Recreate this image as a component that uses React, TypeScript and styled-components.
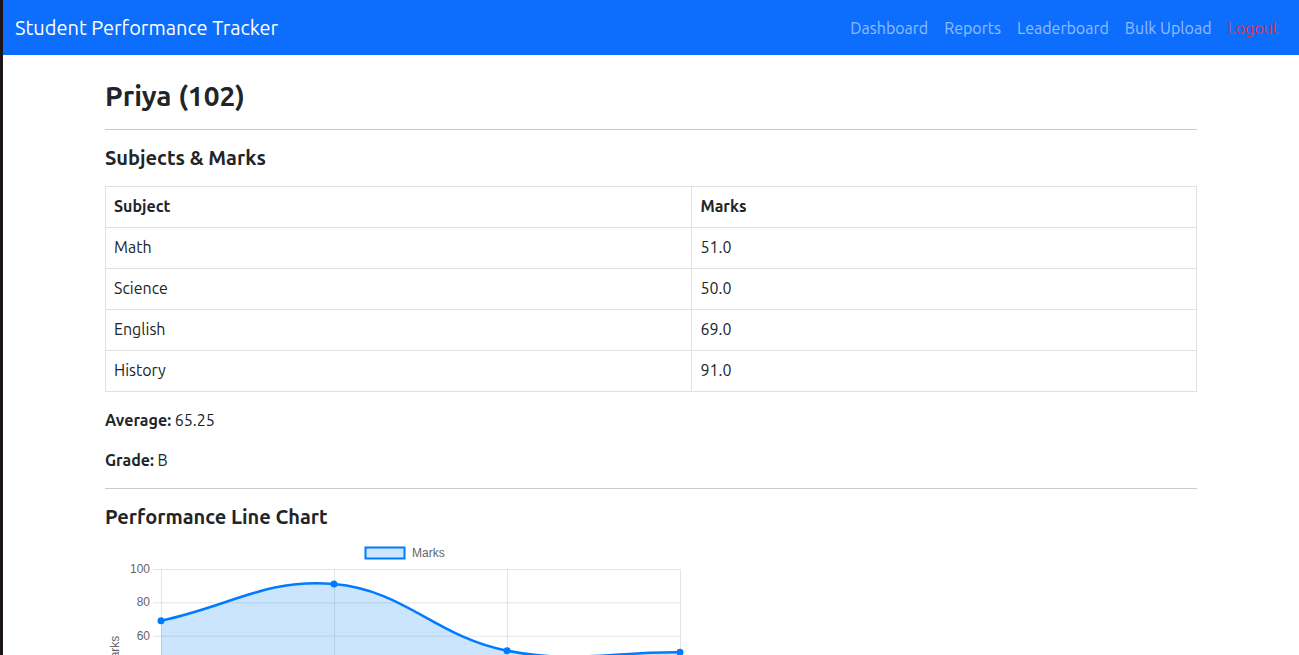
import React from "react";
import styled, { createGlobalStyle } from "styled-components";

const GlobalStyle = createGlobalStyle`
  html, body { margin: 0; padding: 0; background: #ffffff; }
  body {
    font-family: Ubuntu, "Noto Sans", "Open Sans", sans-serif;
    font-size: 16px;
    line-height: 1.5;
    color: #212529;
  }
  * { box-sizing: border-box; }
`;

const Shell = styled.div`
  display: flex;
  min-height: 655px;
`;

const EdgeStrip = styled.div`
  width: 3px;
  flex: 0 0 3px;
  background: #1c1519;
`;

const Page = styled.div`
  flex: 1;
  min-width: 0;
`;

const NavBar = styled.nav`
  height: 55px;
  background: #0d6efd;
  display: flex;
  align-items: center;
  justify-content: space-between;
  padding: 0 12px;
`;

const Brand = styled.a`
  color: #ffffff;
  font-size: 20px;
  line-height: 30px;
  text-decoration: none;
`;

const NavList = styled.div`
  display: flex;
  align-items: center;
`;

const NavLink = styled.a<{ $danger?: boolean }>`
  padding: 8px;
  font-size: 16px;
  line-height: 24px;
  text-decoration: none;
  color: ${(p) => (p.$danger ? "#dc3545" : "rgba(255,255,255,0.55)")};
`;

const Container = styled.main`
  max-width: 1116px;
  margin: 24px auto 0;
  padding: 0 12px;
`;

const Title = styled.h3`
  margin: 0 0 8px;
  font-size: 28px;
  font-weight: 600;
  line-height: 1.2;
`;

const Rule = styled.hr`
  margin: 16px 0;
  border: 0;
  border-top: 1px solid #c8c9ca;
`;

const SectionTitle = styled.h5<{ $gap?: number }>`
  margin: 0 0 ${(p) => p.$gap ?? 8}px;
  font-size: 20px;
  font-weight: 600;
  line-height: 1.2;
`;

const Table = styled.table`
  width: 100%;
  border-collapse: collapse;
  margin-bottom: 16px;
  border: 1px solid #dee2e6;
`;

const Th = styled.th<{ $w?: string }>`
  text-align: left;
  font-weight: 700;
  padding: 7px 8px 9px;
  border: 1px solid #dee2e6;
  width: ${(p) => p.$w ?? "auto"};
`;

const Td = styled.td`
  padding: 7px 8px 9px;
  border: 1px solid #dee2e6;
`;

const Para = styled.p`
  margin: 0 0 16px;
`;

const ChartBox = styled.div`
  width: 600px;
  height: 300px;
`;

const rows = [
  ["Math", "51.0"],
  ["Science", "50.0"],
  ["English", "69.0"],
  ["History", "91.0"],
];

const curve =
  "M161,619.67 C230.2,605 266.43,577.14 334,583 C404.83,589.14 435.41,635.53 507,649.67 C573.81,662.86 610.8,650.67 680,651.33";

const points: [number, number][] = [
  [161, 619.67],
  [334, 583],
  [507, 649.67],
  [680, 651.33],
];

const LineChart = () => {
  const grid = "rgba(0,0,0,0.1)";
  const yTicks = [
    { v: "100", y: 568 },
    { v: "80", y: 601.33 },
    { v: "60", y: 634.67 },
    { v: "40", y: 668 },
    { v: "20", y: 701.33 },
    { v: "0", y: 734.67 },
  ];
  return (
    <svg width="600" height="300" viewBox="105 536 600 300" style={{ display: "block" }}>
      <rect x="365.5" y="546.5" width="39" height="11" fill="rgba(0,123,255,0.2)" stroke="#007bff" strokeWidth="2" />
      <text x="412" y="556" fontFamily="'Liberation Sans', Arial, sans-serif" fontSize="12" fill="#666">
        Marks
      </text>
      {yTicks.map((t) => (
        <g key={t.v}>
          <line x1="153" x2="680" y1={t.y + 0.5} y2={t.y + 0.5} stroke={grid} strokeWidth="1" />
          <text
            x="150"
            y={t.y + 4}
            textAnchor="end"
            fontFamily="'Liberation Sans', Arial, sans-serif"
            fontSize="12"
            fill="#666"
          >
            {t.v}
          </text>
        </g>
      ))}
      {[161, 334, 507, 680].map((x) => (
        <line key={x} x1={x + 0.5} x2={x + 0.5} y1="568" y2="743" stroke={grid} strokeWidth="1" />
      ))}
      <text
        transform="translate(119 651) rotate(-90)"
        textAnchor="middle"
        fontFamily="'Liberation Sans', Arial, sans-serif"
        fontSize="12"
        fill="#666"
      >
        Marks
      </text>
      <path d={`${curve} L680,734.67 L161,734.67 Z`} fill="rgba(0,123,255,0.2)" />
      <path d={curve} fill="none" stroke="#007bff" strokeWidth="2.5" />
      {points.map(([x, y]) => (
        <circle key={x} cx={x} cy={y} r="3.5" fill="#007bff" />
      ))}
    </svg>
  );
};

export default function App() {
  return (
    <>
      <GlobalStyle />
      <Shell>
        <EdgeStrip />
        <Page>
          <NavBar>
            <Brand href="#">Student Performance Tracker</Brand>
            <NavList>
              <NavLink href="#">Dashboard</NavLink>
              <NavLink href="#">Reports</NavLink>
              <NavLink href="#">Leaderboard</NavLink>
              <NavLink href="#">Bulk Upload</NavLink>
              <NavLink href="#" $danger>
                Logout
              </NavLink>
            </NavList>
          </NavBar>
          <Container>
            <Title>Priya (102)</Title>
            <Rule />
            <SectionTitle $gap={16}>Subjects &amp; Marks</SectionTitle>
            <Table>
              <thead>
                <tr>
                  <Th $w="53.75%">Subject</Th>
                  <Th>Marks</Th>
                </tr>
              </thead>
              <tbody>
                {rows.map(([s, m]) => (
                  <tr key={s}>
                    <Td>{s}</Td>
                    <Td>{m}</Td>
                  </tr>
                ))}
              </tbody>
            </Table>
            <Para>
              <strong>Average:</strong> 65.25
            </Para>
            <Para>
              <strong>Grade:</strong> B
            </Para>
            <Rule />
            <SectionTitle>Performance Line Chart</SectionTitle>
            <ChartBox>
              <LineChart />
            </ChartBox>
          </Container>
        </Page>
      </Shell>
    </>
  );
}
